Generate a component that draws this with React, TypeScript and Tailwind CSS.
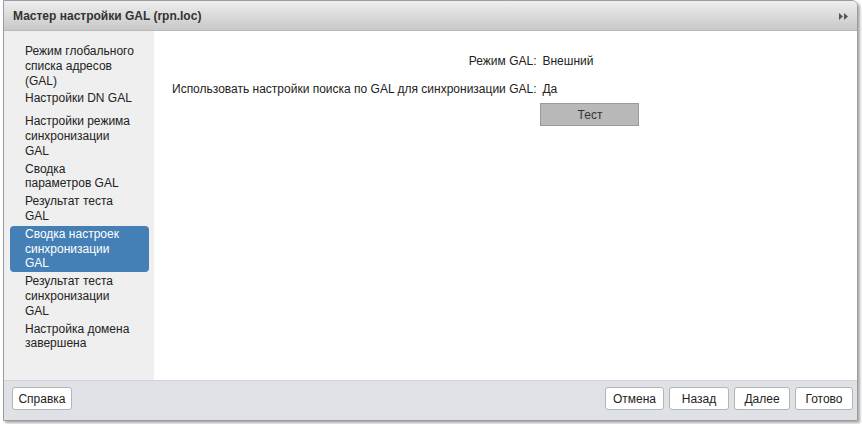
import React from 'react';

const steps = [
  { lines: ['Режим глобального', 'списка адресов', '(GAL)'] },
  { lines: ['Настройки DN GAL'], extra: true },
  { lines: ['Настройки режима', 'синхронизации', 'GAL'] },
  { lines: ['Сводка', 'параметров GAL'] },
  { lines: ['Результат теста', 'GAL'] },
  { lines: ['Сводка настроек', 'синхронизации', 'GAL'], active: true },
  { lines: ['Результат теста', 'синхронизации', 'GAL'] },
  { lines: ['Настройка домена', 'завершена'] },
];

function FooterButton({ label, width }: { label: string; width: string }) {
  return (
    <button
      className={`${width} h-[23px] bg-white border border-[#b4b4b4] rounded-[3px] text-[12px] text-[#222] leading-none`}
    >
      {label}
    </button>
  );
}

export default function App() {
  return (
    <div className="w-[862px] h-[424px] bg-white overflow-hidden font-['Liberation_Sans',Arial,sans-serif] text-[12px] text-[#222]">
      <div className="ml-[3px] w-[855px] h-[421px] flex flex-col border border-[#9c9c9c] rounded-tr-[6px] shadow-[2px_2px_3px_rgba(0,0,0,0.35)] overflow-hidden">
        {/* title bar */}
        <div className="h-[30px] shrink-0 flex items-center justify-between pl-[9px] pr-[9px] bg-gradient-to-b from-[#eeeeee] to-[#c8c8c8] border-b border-[#b9b9b9]">
          <span className="font-bold text-[12px] text-[#333]">Мастер настройки GAL (rpn.loc)</span>
          <svg width="9" height="7" viewBox="0 0 9 7" className="mt-[1px]">
            <path d="M0 0 L4 3.5 L0 7 Z" fill="#555" />
            <path d="M5 0 L9 3.5 L5 7 Z" fill="#555" />
          </svg>
        </div>

        {/* body */}
        <div className="h-[349px] shrink-0 flex">
          <div className="w-[150px] bg-[#efefef] pt-[12px] flex flex-col gap-[1px] overflow-hidden">
            {steps.map((s) => (
              <div
                key={s.lines.join(' ')}
                className={`ml-[6px] mr-[5px] pl-[15px] py-[1px] leading-[14.8px] rounded-[4px] whitespace-nowrap ${
                  s.active ? 'bg-[#447fb6] text-white' : 'text-[#222]'
                } ${s.extra ? 'mb-[5px]' : ''}`}
              >
                {s.lines.map((l) => (
                  <div key={l}>{l}</div>
                ))}
              </div>
            ))}
          </div>

          <div className="flex-1 bg-white pl-[18px] pt-[23px]">
            <div className="grid grid-cols-[auto_auto] justify-start gap-x-[6px] leading-[15px]">
              <div className="text-right">Режим GAL:</div>
              <div>Внешний</div>
              <div className="text-right mt-[13px]">Использовать настройки поиска по GAL для синхронизации GAL:</div>
              <div className="mt-[13px]">Да</div>
              <div />
              <div className="mt-[6px] -ml-[2px]">
                <button className="w-[99px] h-[23px] bg-[#b8b8b8] border border-[#9a9a9a] text-[12px] text-[#333] leading-none">
                  Тест
                </button>
              </div>
            </div>
          </div>
        </div>

        {/* footer */}
        <div className="flex-1 bg-[#dee2e7] border-t border-[#d0d4d9] flex items-start justify-between pl-[8px] pr-[4px] pt-[6px]">
          <FooterButton label="Справка" width="w-[60px]" />
          <div className="flex gap-[5px]">
            <FooterButton label="Отмена" width="w-[59px]" />
            <FooterButton label="Назад" width="w-[60px]" />
            <FooterButton label="Далее" width="w-[56px]" />
            <FooterButton label="Готово" width="w-[58px]" />
          </div>
        </div>
      </div>
    </div>
  );
}
